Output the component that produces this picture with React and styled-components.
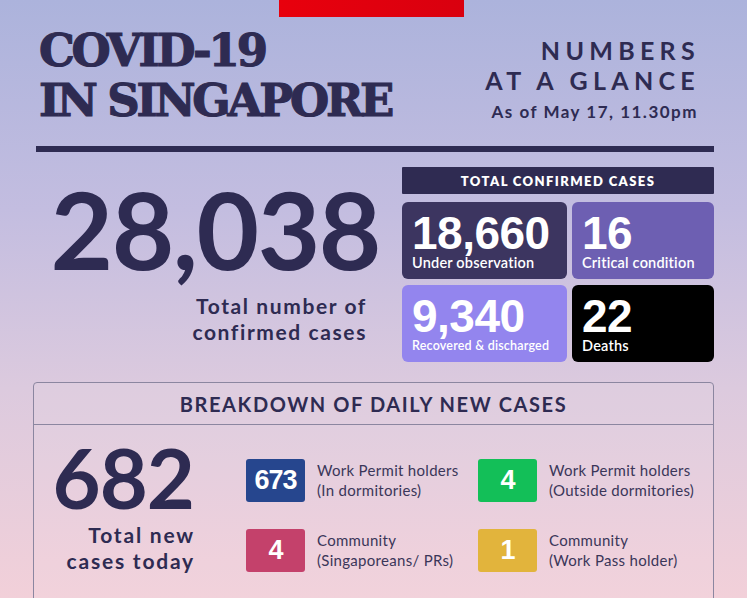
import React from 'react';
import styled, { createGlobalStyle } from 'styled-components';

const ink = '#2e2b52';

const GlobalStyle = createGlobalStyle`
  html, body {
    margin: 0;
    padding: 0;
  }
  body {
    font-family: Lato, 'Noto Sans', sans-serif;
    color: ${ink};
  }
`;

const Page = styled.main`
  width: 747px;
  height: 598px;
  overflow: hidden;
  box-sizing: border-box;
  padding: 0 33px;
  background: linear-gradient(180deg, #acb3dc 0%, #c3bde0 35%, #dccade 65%, #f2d0d9 100%);
`;

const RedBar = styled.div`
  width: 185px;
  height: 17px;
  margin-left: 246px;
  background: linear-gradient(90deg, #e8000d, #d9000f);
`;

const Masthead = styled.header`
  display: flex;
  justify-content: space-between;
  align-items: flex-start;
  margin-top: 9px;
`;

const Title = styled.h1`
  margin: 0 0 0 6px;
  font-family: 'DejaVu Serif', 'Liberation Serif', serif;
  font-weight: 700;
  font-size: 45px;
  line-height: 50px;
  letter-spacing: -3.2px;
  -webkit-text-stroke: 1.1px ${ink};
`;

const Glance = styled.div`
  margin: 9px 14px 0 0;
  text-align: right;
  font-weight: 700;

  .big {
    font-size: 25px;
    line-height: 30px;
    letter-spacing: 5.3px;
  }

  .date {
    margin: 7px 2px 0 0;
    font-size: 17px;
    line-height: 20px;
    letter-spacing: 1.5px;
  }
`;

const Rule = styled.hr`
  margin: 20px 0 0 3px;
  height: 6px;
  border: 0;
  background: ${ink};
`;

const Stats = styled.section`
  display: grid;
  grid-template-columns: 1fr 312px;
  column-gap: 12px;
  margin-top: 15px;
`;

const Total = styled.div`
  display: flex;
  flex-direction: column;
  align-items: flex-end;
  padding-right: 10px;

  .number {
    margin-top: 7px;
    font-size: 108px;
    line-height: 108px;
    font-weight: 700;
    letter-spacing: -1.5px;
  }

  .label {
    margin: 11px 13px 0 0;
    text-align: right;
    font-size: 21px;
    line-height: 26px;
    font-weight: 700;
    letter-spacing: 1.6px;
  }
`;

const BarTitle = styled.div`
  height: 27px;
  display: flex;
  align-items: center;
  justify-content: center;
  background: #2f2b52;
  color: #fff;
  font-size: 13px;
  font-weight: 800;
  letter-spacing: 1.4px;
  border-radius: 1px;
`;

const TileGrid = styled.div`
  display: grid;
  grid-template-columns: 165px 1fr;
  grid-auto-rows: 77px;
  gap: 6px 5px;
  margin-top: 8px;
`;

const Tile = styled.div`
  box-sizing: border-box;
  padding: 10px 0 0 10px;
  border-radius: 6px;
  background: ${(p) => p.$bg};
  color: #fff;

  .value {
    font-family: 'Liberation Sans', Arial, sans-serif;
    font-weight: 700;
    font-size: 46px;
    line-height: 42px;
    letter-spacing: -0.5px;
  }

  .caption {
    margin-top: 1px;
    font-size: ${(p) => (p.$small ? '12.5px' : '14.5px')};
    line-height: 15px;
    font-weight: 600;
    letter-spacing: 0.2px;
  }
`;

const Breakdown = styled.section`
  margin-top: 20px;
  border: 1px solid #8b86a0;
  border-radius: 4px;
  background: rgba(255, 255, 255, 0.06);
  height: 240px;
`;

const BreakdownHead = styled.h2`
  margin: 0;
  height: 41px;
  display: flex;
  align-items: center;
  justify-content: center;
  border-bottom: 1px solid #8b86a0;
  font-size: 20px;
  line-height: 24px;
  font-weight: 700;
  letter-spacing: 1.6px;
`;

const BreakdownBody = styled.div`
  display: flex;
  padding: 11px 0 0 20px;
`;

const Today = styled.div`
  width: 140px;
  display: flex;
  flex-direction: column;
  align-items: flex-end;

  .number {
    font-size: 83px;
    line-height: 82px;
    font-weight: 700;
    letter-spacing: -1px;
  }

  .label {
    margin: 4px -1px 0 0;
    text-align: right;
    font-size: 21px;
    line-height: 26px;
    font-weight: 700;
    letter-spacing: 1.8px;
  }
`;

const Categories = styled.div`
  display: grid;
  grid-template-columns: 232px 1fr;
  row-gap: 25px;
  margin: 23px 0 0 52px;
`;

const Category = styled.div`
  display: flex;
  align-items: flex-start;
  gap: 12px;
`;

const Badge = styled.div`
  flex: none;
  width: 59px;
  height: 43px;
  display: flex;
  align-items: center;
  justify-content: center;
  border-radius: 3px;
  background: ${(p) => p.$bg};
  color: #fff;
  font-family: 'Liberation Sans', Arial, sans-serif;
  font-weight: 700;
  font-size: 27px;
  letter-spacing: -1px;
`;

const CategoryText = styled.div`
  margin-top: 1px;
  font-size: 15px;
  line-height: 20px;
  color: #3a3659;
  letter-spacing: 0.3px;
`;

const tiles = [
  { value: '18,660', caption: 'Under observation', bg: '#3c3560' },
  { value: '16', caption: 'Critical condition', bg: '#6d5fb2' },
  { value: '9,340', caption: 'Recovered & discharged', bg: '#9385ee', small: true },
  { value: '22', caption: 'Deaths', bg: '#000000' },
];

const categories = [
  { value: '673', bg: '#26468e', lines: ['Work Permit holders', '(In dormitories)'] },
  { value: '4', bg: '#13bf58', lines: ['Work Permit holders', '(Outside dormitories)'] },
  { value: '4', bg: '#c4416b', lines: ['Community', '(Singaporeans/ PRs)'] },
  { value: '1', bg: '#e2b43c', lines: ['Community', '(Work Pass holder)'] },
];

const App = () => (
  <>
    <GlobalStyle />
    <Page>
      <RedBar />
      <Masthead>
        <Title>
          COVID-19
          <br />
          IN SINGAPORE
        </Title>
        <Glance>
          <div className="big">NUMBERS</div>
          <div className="big">AT A GLANCE</div>
          <div className="date">As of May 17, 11.30pm</div>
        </Glance>
      </Masthead>
      <Rule />

      <Stats>
        <Total>
          <div className="number">28,038</div>
          <div className="label">
            Total number of
            <br />
            confirmed cases
          </div>
        </Total>
        <div>
          <BarTitle>TOTAL CONFIRMED CASES</BarTitle>
          <TileGrid>
            {tiles.map((t) => (
              <Tile key={t.caption} $bg={t.bg} $small={t.small}>
                <div className="value">{t.value}</div>
                <div className="caption">{t.caption}</div>
              </Tile>
            ))}
          </TileGrid>
        </div>
      </Stats>

      <Breakdown>
        <BreakdownHead>BREAKDOWN OF DAILY NEW CASES</BreakdownHead>
        <BreakdownBody>
          <Today>
            <div className="number">682</div>
            <div className="label">
              Total new
              <br />
              cases today
            </div>
          </Today>
          <Categories>
            {categories.map((c) => (
              <Category key={c.lines[1]}>
                <Badge $bg={c.bg}>{c.value}</Badge>
                <CategoryText>
                  {c.lines[0]}
                  <br />
                  {c.lines[1]}
                </CategoryText>
              </Category>
            ))}
          </Categories>
        </BreakdownBody>
      </Breakdown>
    </Page>
  </>
);

export default App;
